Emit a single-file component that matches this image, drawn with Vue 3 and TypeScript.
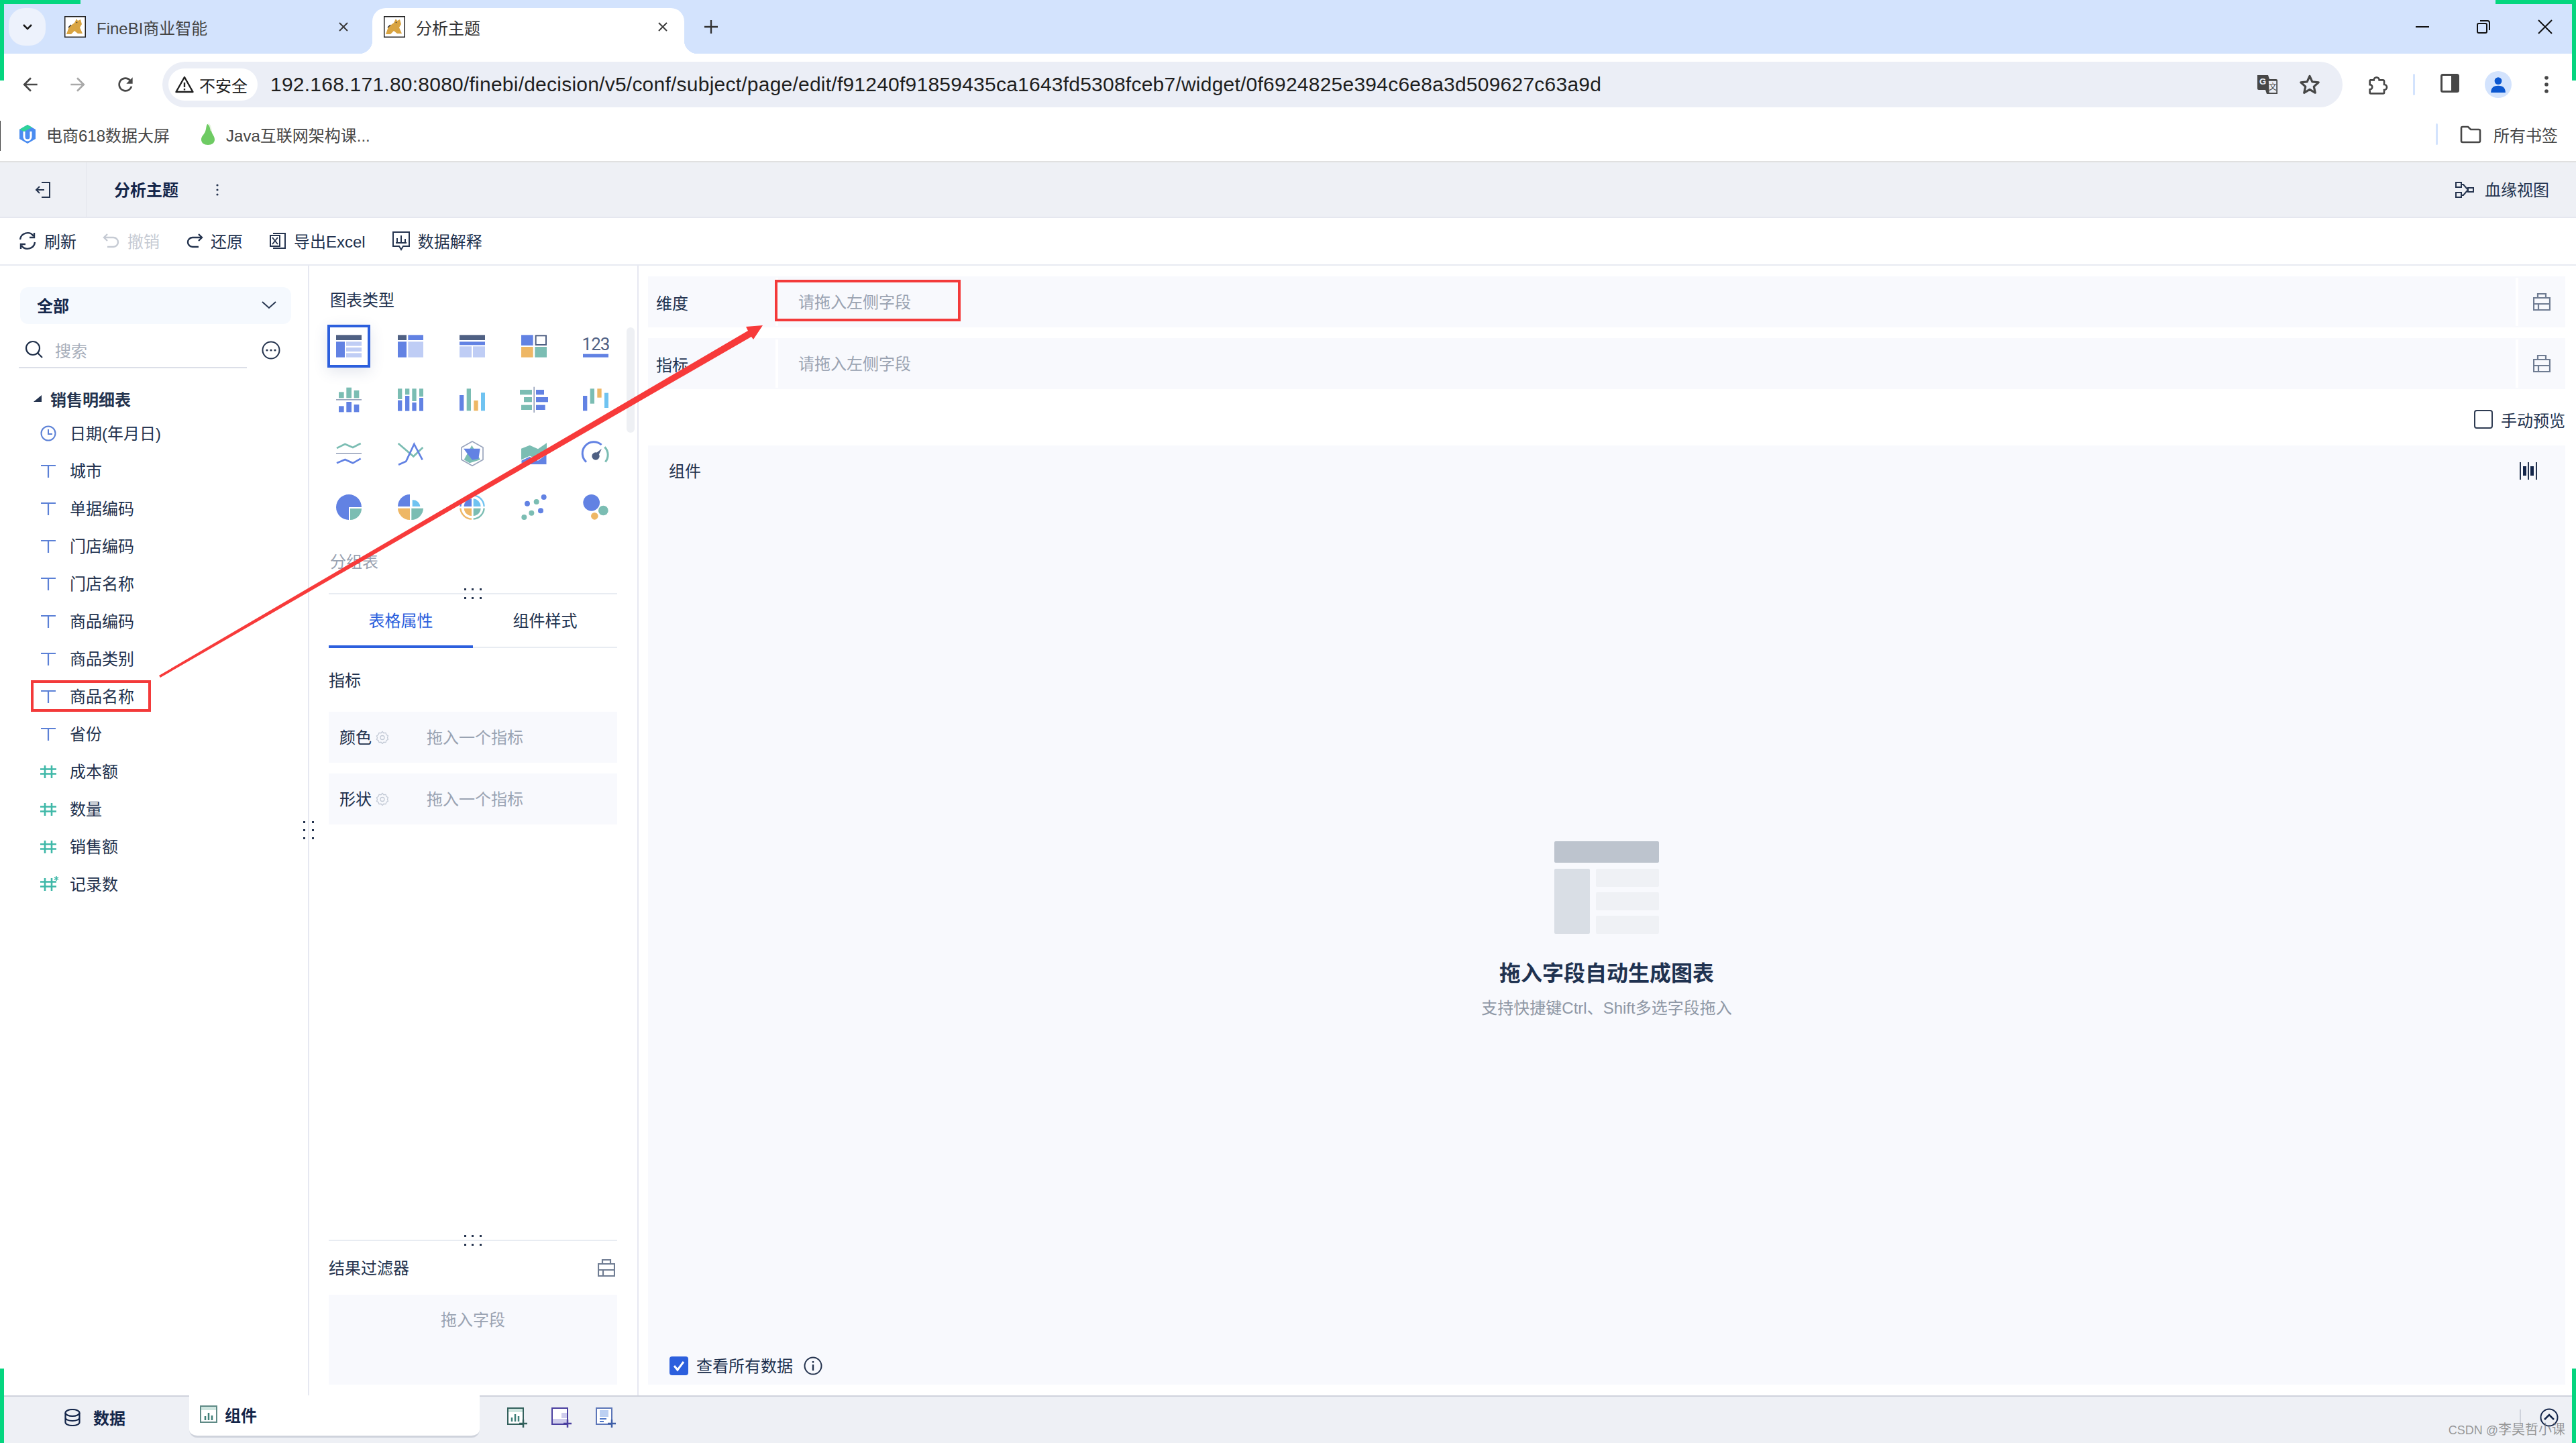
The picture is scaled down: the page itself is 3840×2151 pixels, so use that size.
<script setup lang="ts">
interface Field { name: string; kind: 'time' | 'text' | 'num' | 'rec' }
const fields: Field[] = [
  { name: '日期(年月日)', kind: 'time' },
  { name: '城市', kind: 'text' },
  { name: '单据编码', kind: 'text' },
  { name: '门店编码', kind: 'text' },
  { name: '门店名称', kind: 'text' },
  { name: '商品编码', kind: 'text' },
  { name: '商品类别', kind: 'text' },
  { name: '商品名称', kind: 'text' },
  { name: '省份', kind: 'text' },
  { name: '成本额', kind: 'num' },
  { name: '数量', kind: 'num' },
  { name: '销售额', kind: 'num' },
  { name: '记录数', kind: 'rec' },
]
const url = '192.168.171.80:8080/finebi/decision/v5/conf/subject/page/edit/f91240f91859435ca1643fd5308fceb7/widget/0f6924825e394c6e8a3d509627c63a9d'
const dropRows = [{ label: '维度' }, { label: '指标' }]
const measureRows = ['颜色', '形状']
</script>

<template>
  <div class="page">
    <!-- browser tab strip -->
    <div class="tabstrip">
      <div class="tab-search">
        <svg width="20" height="20" viewBox="0 0 20 20"><path d="M4 7l6 6 6-6" fill="none" stroke="#1f1f1f" stroke-width="2.6" /></svg>
      </div>
      <div class="tab">
        <svg class="favicon" viewBox="0 0 32 32"><rect x=".75" y=".75" width="30.5" height="30.5" fill="#fff" stroke="#222" stroke-width="1.5" /><path d="M3 27l4-11 8-6 3-6 2 3 4-2 2 7-3 5 4 9h-7l-5-4-5 5z" fill="#d9a441" /><path d="M6 17l4-4M18 9l1 1" stroke="#333" stroke-width="1.5" /></svg>
        <span class="tab-title">FineBI商业智能</span>
        <svg class="tab-close" viewBox="0 0 16 16"><path d="M2 2l12 12M14 2L2 14" stroke="#3c3c3c" stroke-width="2" /></svg>
      </div>
      <div class="tab tab-active">
        <svg class="favicon" viewBox="0 0 32 32"><rect x=".75" y=".75" width="30.5" height="30.5" fill="#fff" stroke="#222" stroke-width="1.5" /><path d="M3 27l4-11 8-6 3-6 2 3 4-2 2 7-3 5 4 9h-7l-5-4-5 5z" fill="#d9a441" /><path d="M6 17l4-4M18 9l1 1" stroke="#333" stroke-width="1.5" /></svg>
        <span class="tab-title">分析主题</span>
        <svg class="tab-close" viewBox="0 0 16 16"><path d="M2 2l12 12M14 2L2 14" stroke="#3c3c3c" stroke-width="2" /></svg>
      </div>
      <svg class="tab-plus" width="22" height="22" viewBox="0 0 22 22"><path d="M11 1v20M1 11h20" stroke="#333" stroke-width="2.4" /></svg>
      <div class="win-controls">
        <svg width="20" height="20" viewBox="0 0 20 20"><path d="M0 10h20" stroke="#111" stroke-width="2" /></svg>
        <svg width="20" height="20" viewBox="0 0 20 20"><rect x="1" y="5" width="14" height="14" rx="2" fill="none" stroke="#111" stroke-width="2" /><path d="M5 1h11a3 3 0 0 1 3 3v11" fill="none" stroke="#111" stroke-width="2" /></svg>
        <svg width="22" height="22" viewBox="0 0 22 22"><path d="M1 1l20 20M21 1L1 21" stroke="#111" stroke-width="2" /></svg>
      </div>
    </div>

    <!-- browser address bar -->
    <div class="navbar">
      <svg class="nav-btn" viewBox="0 0 24 24"><path d="M20 11H7.83l5.59-5.59L12 4l-8 8 8 8 1.41-1.41L7.83 13H20v-2z" fill="#474747" /></svg>
      <svg class="nav-btn" viewBox="0 0 24 24"><path d="M4 11h12.17l-5.59-5.59L12 4l8 8-8 8-1.41-1.41L16.17 13H4v-2z" fill="#a9a9a9" /></svg>
      <svg class="nav-btn" viewBox="0 0 24 24"><path d="M17.65 6.35A7.958 7.958 0 0 0 12 4c-4.42 0-7.99 3.58-7.99 8s3.57 8 7.99 8c3.73 0 6.84-2.55 7.73-6h-2.08A5.99 5.99 0 0 1 12 18c-3.31 0-6-2.69-6-6s2.69-6 6-6c1.66 0 3.14.69 4.22 1.78L13 11h7V4l-2.35 2.35z" fill="#474747" /></svg>
      <div class="omnibox">
        <div class="chip">
          <svg width="28" height="26" viewBox="0 0 28 26"><path d="M14 2l12.5 22h-25z" fill="none" stroke="#1f1f1f" stroke-width="2.4" stroke-linejoin="round" /><path d="M14 10v7M14 19v2.5" stroke="#1f1f1f" stroke-width="2.4" /></svg>
          <span>不安全</span>
        </div>
        <span class="url">{{ url }}</span>
        <svg class="omni-ico" width="34" height="34" viewBox="0 0 34 34"><path d="M2 3h16l2 6h10a2 2 0 0 1 2 2v20H16l-2-6H4a2 2 0 0 1-2-2z" fill="#474747" /><path d="M18 11h13v19H19z" fill="#ebeef6" stroke="#474747" stroke-width="1.5" /><text x="5" y="17" class="ico-text g">G</text><text x="19" y="25" class="ico-text w">文</text></svg>
        <svg class="omni-ico star" width="34" height="32" viewBox="0 0 24 24"><path d="M12 2.5l2.9 6.4 7 .7-5.2 4.7 1.5 6.9-6.2-3.6-6.2 3.6 1.5-6.9-5.2-4.7 7-.7z" fill="none" stroke="#474747" stroke-width="2.4" stroke-linejoin="round" /></svg>
      </div>
      <svg class="tb-ico ext" width="32" height="32" viewBox="0 0 24 24"><path d="M4 7h4a3 3 0 0 1 6 0h4a1.500 1.500 0 0 1 1.500 1.500v3.500a3 3 0 0 1 0 6v3a1 1 0 0 1-1 1H4.500a1 1 0 0 1-1-1v-3.500a2.700 2.700 0 0 0 0-5.400V8a1 1 0 0 1 .5-1z" fill="none" stroke="#474747" stroke-width="2" /></svg>
      <span class="tb-sep"></span>
      <svg class="tb-ico" width="28" height="28" viewBox="0 0 28 28"><rect x="1.500" y="1.500" width="25" height="25" rx="2" fill="none" stroke="#474747" stroke-width="3" /><rect x="16" y="2" width="10" height="24" fill="#474747" /></svg>
      <div class="avatar">
        <svg width="26" height="26" viewBox="0 0 24 24"><circle cx="12" cy="7" r="5" fill="#0b57d0" /><path d="M2 23c0-7 4-9.500 10-9.500S22 16 22 23z" fill="#0b57d0" /></svg>
      </div>
      <svg class="tb-ico dots" width="10" height="28" viewBox="0 0 10 28"><circle cx="5" cy="4" r="2.800" fill="#474747" /><circle cx="5" cy="14" r="2.800" fill="#474747" /><circle cx="5" cy="24" r="2.800" fill="#474747" /></svg>
    </div>

    <!-- bookmarks -->
    <div class="bookmarks">
      <svg class="bm-ico" width="30" height="32" viewBox="0 0 30 32"><path d="M3 9l12-7 12 7v14l-12 7-12-7z" fill="#4a8cf0" /><path d="M3 9l12-7 7 4-12 6z" fill="#2fd39a" /><path d="M10 12v8a5 5 0 0 0 10 0v-8" fill="none" stroke="#fff" stroke-width="3" /></svg>
      <span class="bm-text">电商618数据大屏</span>
      <svg class="bm-pear" width="28" height="34" viewBox="0 0 28 34"><path d="M14 2c3 0 4 5 5 10s5 8 5 13-4 8-10 8-10-3-10-8 4-7 6-12 1-11 4-11z" fill="#6ecb63" /><path d="M14 2c3 0 4 5 5 10" stroke="#e7f5e0" stroke-width="2" fill="none" /></svg>
      <span class="bm-text">Java互联网架构课...</span>
      <span class="bm-fill"></span>
      <span class="bm-sep"></span>
      <svg class="bm-folder" width="32" height="28" viewBox="0 0 32 28"><path d="M2 5a2 2 0 0 1 2-2h8l4 4h12a2 2 0 0 1 2 2v15a2 2 0 0 1-2 2H4a2 2 0 0 1-2-2z" fill="none" stroke="#474747" stroke-width="2.600" /></svg>
      <span class="bm-all">所有书签</span>
    </div>

    <!-- app header -->
    <div class="appbar">
      <div class="appbar-back">
        <svg width="26" height="26" viewBox="0 0 26 26"><path d="M10 2h12v22H10M2 13h12M7 8l-5 5 5 5" fill="none" stroke="#25344f" stroke-width="2" /></svg>
      </div>
      <span class="app-title">分析主题</span>
      <svg class="app-more" width="6" height="20" viewBox="0 0 6 20"><circle cx="3" cy="3" r="1.600" fill="#25344f" /><circle cx="3" cy="10" r="1.600" fill="#25344f" /><circle cx="3" cy="17" r="1.600" fill="#25344f" /></svg>
      <span class="bm-fill"></span>
      <svg width="28" height="26" viewBox="0 0 28 26"><path d="M1 2h8v7H1zM1 17h8v7H1zM19 10h8v6h-8z" fill="none" stroke="#25344f" stroke-width="2" /><path d="M9 5h3l7 8M9 21h3l7-8" fill="none" stroke="#25344f" stroke-width="2" /></svg>
      <span class="app-lineage">血缘视图</span>
    </div>

    <!-- action toolbar -->
    <div class="actions">
      <div class="act">
        <svg width="28" height="28" viewBox="0 0 28 28"><path d="M3 12A11 11 0 0 1 23 7M25 16A11 11 0 0 1 5 21" fill="none" stroke="#25344f" stroke-width="2.400" /><path d="M24 2v7h-7M4 26v-7h7" fill="none" stroke="#25344f" stroke-width="2.400" /></svg>
        <span>刷新</span>
      </div>
      <div class="act act-off">
        <svg width="26" height="26" viewBox="0 0 26 26"><path d="M7 3L2 8l5 5M2 8h14a7 7 0 0 1 0 14H7" fill="none" stroke="#c6cbd4" stroke-width="2.400" /></svg>
        <span>撤销</span>
      </div>
      <div class="act">
        <svg width="26" height="26" viewBox="0 0 26 26"><path d="M19 3l5 5-5 5M24 8H10a7 7 0 0 0 0 14h9" fill="none" stroke="#25344f" stroke-width="2.400" /></svg>
        <span>还原</span>
      </div>
      <div class="act">
        <svg width="26" height="26" viewBox="0 0 26 26"><path d="M6 2h18v22H6M2 5h14v16H2zM5 8l8 10M13 8l-8 10" fill="none" stroke="#25344f" stroke-width="2" /></svg>
        <span>导出Excel</span>
      </div>
      <div class="act">
        <svg width="28" height="30" viewBox="0 0 28 30"><path d="M2 2h24v21H17l-3 5-3-5H2z" fill="none" stroke="#25344f" stroke-width="2" /><path d="M8 11v7M14 7v11M20 12v6M6 18h16" fill="none" stroke="#25344f" stroke-width="2" /></svg>
        <span>数据解释</span>
      </div>
    </div>

    <!-- workspace -->
    <div class="main">
      <aside class="fields">
        <div class="scope">
          <span>全部</span>
          <svg width="22" height="12" viewBox="0 0 22 12"><path d="M1 1l10 9 10-9" fill="none" stroke="#25344f" stroke-width="2" /></svg>
        </div>
        <div class="search-row">
          <div class="search">
            <svg width="28" height="28" viewBox="0 0 28 28"><circle cx="12" cy="12" r="10" fill="none" stroke="#1f2f49" stroke-width="2.200" /><path d="M19 19l7 7" stroke="#1f2f49" stroke-width="2.200" /></svg>
            <span>搜索</span>
          </div>
          <svg class="more" width="28" height="28" viewBox="0 0 28 28"><circle cx="14" cy="14" r="12.500" fill="none" stroke="#25344f" stroke-width="2" /><circle cx="8" cy="14" r="1.600" fill="#25344f" /><circle cx="14" cy="14" r="1.600" fill="#25344f" /><circle cx="20" cy="14" r="1.600" fill="#25344f" /></svg>
        </div>
        <div class="tree-title">
          <svg width="12" height="10" viewBox="0 0 12 10"><path d="M0 10L12 0v10z" fill="#25344f" /></svg>
          <span>销售明细表</span>
        </div>
        <div v-for="f in fields" :key="f.name" class="field">
          <svg v-if="f.kind === 'time'" class="fico" viewBox="0 0 24 24"><circle cx="12" cy="12" r="10.500" fill="none" stroke="#5b80d6" stroke-width="2" /><path d="M12 6v7h6" fill="none" stroke="#5b80d6" stroke-width="2" /></svg>
          <svg v-else-if="f.kind === 'text'" class="fico" viewBox="0 0 24 24"><path d="M1 4h22M12 4v18" fill="none" stroke="#5b80d6" stroke-width="2.200" /></svg>
          <svg v-else class="fico" viewBox="0 0 24 24"><path d="M0 8.500h24M0 15.500h24M7 3v19M17 3v19" fill="none" stroke="#3fb8a8" stroke-width="2.600" /><path v-if="f.kind === 'rec'" d="M24 0v7M21 2l6 3M27 2l-6 3" stroke="#3fb8a8" stroke-width="1.500" /></svg>
          <span class="lift">{{ f.name }}</span>
        </div>
        <svg class="handle-v" width="16" height="28" viewBox="0 0 16 28"><g fill="#25344f"><rect y="0" width="3" height="3" /><rect y="12" width="3" height="3" /><rect y="24" width="3" height="3" /><rect x="13" y="0" width="3" height="3" /><rect x="13" y="12" width="3" height="3" /><rect x="13" y="24" width="3" height="3" /></g></svg>
      </aside>

      <section class="config">
        <div class="chart-types">
          <div class="sec-title">图表类型</div>
          <div class="chart-grid">
            <div class="cell selected">
              <svg viewBox="0 0 114 114"><rect y="7" width="114" height="23" fill="#4f6083" /><rect y="37" width="39" height="70" fill="#6282e3" /><rect x="45" y="37" width="69" height="19" fill="#bfcdf5" /><rect x="45" y="63" width="69" height="18" fill="#bfcdf5" /><rect x="45" y="88" width="69" height="19" fill="#bfcdf5" /></svg>
            </div>
            <div class="cell">
              <svg viewBox="0 0 114 114"><rect y="7" width="39" height="23" fill="#4f6083" /><rect x="46" y="7" width="68" height="23" fill="#6282e3" /><rect y="37" width="39" height="70" fill="#6282e3" /><rect x="46" y="37" width="68" height="70" fill="#bfcdf5" /></svg>
            </div>
            <div class="cell">
              <svg viewBox="0 0 114 114"><rect y="7" width="114" height="23" fill="#4f6083" /><rect y="37" width="114" height="15" fill="#6282e3" /><rect y="58" width="54" height="49" fill="#bfcdf5" /><rect x="60" y="58" width="54" height="49" fill="#bfcdf5" /></svg>
            </div>
            <div class="cell">
              <svg viewBox="0 0 114 114"><rect y="7" width="53" height="47" fill="#6282e3" /><rect x="65" y="10" width="46" height="41" fill="#fff" stroke="#4f6083" stroke-width="6" /><rect y="60" width="53" height="47" fill="#eeb765" /><rect x="61" y="60" width="53" height="47" fill="#7bbdb3" /></svg>
            </div>
            <div class="cell">
              <svg viewBox="0 0 114 114"><text x="57" y="74" text-anchor="middle" class="num-glyph">123</text><rect y="92" width="114" height="15" fill="#6282e3" /></svg>
            </div>

            <div class="cell">
              <svg viewBox="0 0 114 114"><rect x="12" y="22" width="23" height="27" fill="#7bbdb3" /><rect x="46" y="2" width="23" height="47" fill="#7bbdb3" /><rect x="80" y="15" width="23" height="34" fill="#7bbdb3" /><rect y="54" width="114" height="5" fill="#9aa5bd" /><rect x="12" y="85" width="23" height="27" fill="#6282e3" /><rect x="46" y="66" width="23" height="46" fill="#6282e3" /><rect x="80" y="78" width="23" height="34" fill="#6282e3" /></svg>
            </div>
            <div class="cell">
              <svg viewBox="0 0 114 114"><rect y="7" width="19" height="47" fill="#7bbdb3" /><rect y="59" width="19" height="48" fill="#6282e3" /><rect x="33" y="7" width="19" height="27" fill="#7bbdb3" /><rect x="33" y="39" width="19" height="68" fill="#6282e3" /><rect x="64" y="7" width="19" height="56" fill="#7bbdb3" /><rect x="64" y="69" width="19" height="38" fill="#6282e3" /><rect x="96" y="7" width="18" height="36" fill="#7bbdb3" /><rect x="96" y="48" width="18" height="59" fill="#6282e3" /></svg>
            </div>
            <div class="cell">
              <svg viewBox="0 0 114 114"><rect y="36" width="19" height="70" fill="#6282e3" /><rect x="32" y="7" width="19" height="99" fill="#7bbdb3" /><rect x="64" y="60" width="19" height="46" fill="#eeb765" /><rect x="96" y="25" width="18" height="81" fill="#6fc3f1" /></svg>
            </div>
            <div class="cell">
              <svg viewBox="0 0 114 114" class="over"><rect x="55" y="-1" width="5" height="115" fill="#9aa5bd" /><rect x="-6" y="12" width="54" height="22" fill="#7bbdb3" /><rect x="12" y="45" width="36" height="22" fill="#7bbdb3" /><rect y="80" width="48" height="22" fill="#7bbdb3" /><rect x="66" y="12" width="36" height="22" fill="#6282e3" /><rect x="66" y="45" width="54" height="22" fill="#6282e3" /><rect x="66" y="80" width="41" height="22" fill="#6282e3" /></svg>
            </div>
            <div class="cell">
              <svg viewBox="0 0 114 114"><rect y="39" width="19" height="67" fill="#6282e3" /><rect x="32" y="7" width="19" height="67" fill="#7bbdb3" /><rect x="64" y="7" width="19" height="40" fill="#eeb765" /><rect x="96" y="26" width="18" height="67" fill="#6fc3f1" /></svg>
            </div>

            <div class="cell">
              <svg viewBox="0 0 114 114"><path d="M3 33l37-18 35 15 35-18" fill="none" stroke="#7bbdb3" stroke-width="8" /><rect y="54" width="114" height="5" fill="#9aa5bd" /><path d="M3 100l37-16 35 16 35-20" fill="none" stroke="#6282e3" stroke-width="8" /></svg>
            </div>
            <div class="cell">
              <svg viewBox="0 0 114 114"><path d="M2 12l68 58 42-40" fill="none" stroke="#7bbdb3" stroke-width="8" /><path d="M3 107l34-15L73 15l37 70" fill="none" stroke="#6282e3" stroke-width="8" /></svg>
            </div>
            <div class="cell">
              <svg viewBox="0 0 114 114"><path d="M57 3l48 27v55l-48 27-48-27V30z" fill="none" stroke="#9aa5bd" stroke-width="5" /><path d="M55 20l38 65-48 15-25-15z" fill="#7bbdb3" /><path d="M18 35h74l-7 45-28 6z" fill="#6282e3" /></svg>
            </div>
            <div class="cell">
              <svg viewBox="0 0 114 114"><path d="M0 35l38-15 37 17 39-27v72L75 85 38 68 0 85z" fill="#7bbdb3" /><path d="M0 88l38-18 37 18 25-18 14-10v47H0z" fill="#6282e3" stroke="#fff" stroke-width="3" /></svg>
            </div>
            <div class="cell">
              <svg viewBox="0 0 114 114"><path d="M15 95A50 50 0 0 1 83 18" fill="none" stroke="#6282e3" stroke-width="9" /><path d="M97 28A50 50 0 0 1 100 95" fill="none" stroke="#7bbdb3" stroke-width="9" /><circle cx="57" cy="69" r="17" fill="#4f6083" /><path d="M50 62l34-27-20 42z" fill="#4f6083" /></svg>
            </div>

            <div class="cell">
              <svg viewBox="0 0 114 114"><path d="M57 114A57 57 0 1 1 114 57H57z" fill="#6282e3" /><path d="M63 63h51A51 51 0 0 1 63 114z" fill="#7bbdb3" /></svg>
            </div>
            <div class="cell">
              <svg viewBox="0 0 114 114"><path d="M54 54H0A54 54 0 0 1 54 0z" fill="#6282e3" /><path d="M65 54V25a32 32 0 0 1 35 29z" fill="#6fc3f1" /><path d="M54 62H0a54 54 0 0 0 54 52z" fill="#eeb765" /><path d="M61 62h53a53 53 0 0 1-53 52z" fill="#7bbdb3" /></svg>
            </div>
            <div class="cell">
              <svg viewBox="0 0 114 114"><path d="M54 4A53 53 0 0 0 4 54" fill="none" stroke="#6282e3" stroke-width="7" /><path d="M62 4a52 52 0 0 1 48 50" fill="none" stroke="#6fc3f1" stroke-width="7" /><path d="M4 62a52 52 0 0 0 50 48" fill="none" stroke="#eeb765" stroke-width="7" /><path d="M110 62a52 52 0 0 1-48 48" fill="none" stroke="#7bbdb3" stroke-width="7" /><path d="M54 54H20a35 35 0 0 1 34-35z" fill="#6282e3" /><path d="M62 54V19a36 36 0 0 1 33 35z" fill="#6fc3f1" /><path d="M54 62H20a35 35 0 0 0 34 34z" fill="#eeb765" /><path d="M62 62h33a34 34 0 0 1-33 34z" fill="#7bbdb3" /></svg>
            </div>
            <div class="cell">
              <svg viewBox="0 0 114 114"><circle cx="13" cy="102" r="12" fill="#7bbdb3" /><circle cx="46" cy="83" r="12" fill="#7bbdb3" /><circle cx="87" cy="73" r="12" fill="#6282e3" /><circle cx="27" cy="41" r="12" fill="#6282e3" /><circle cx="68" cy="33" r="12" fill="#7bbdb3" /><circle cx="101" cy="12" r="12" fill="#6282e3" /></svg>
            </div>
            <div class="cell">
              <svg viewBox="0 0 114 114"><circle cx="38" cy="37" r="37" fill="#6282e3" /><circle cx="91" cy="72" r="22" fill="#7bbdb3" /><circle cx="52" cy="97" r="16" fill="#eeb765" /></svg>
            </div>
          </div>
          <div class="chart-name">分组表</div>
          <div class="scrollbar"></div>
        </div>

        <div class="rule">
          <svg class="handle-h" width="26" height="16" viewBox="0 0 26 16"><g fill="#25344f"><rect width="3" height="3" /><rect x="11" width="3" height="3" /><rect x="23" width="3" height="3" /><rect y="13" width="3" height="3" /><rect x="11" y="13" width="3" height="3" /><rect x="23" y="13" width="3" height="3" /></g></svg>
        </div>
        <div class="prop-tabs">
          <div class="prop-tab active">表格属性</div>
          <div class="prop-tab">组件样式</div>
        </div>
        <div class="prop-head">指标</div>
        <div class="measures">
          <div v-for="m in measureRows" :key="m" class="measure">
            <span class="m-label lift">{{ m }}</span>
            <svg class="gear" width="20" height="20" viewBox="0 0 20 20"><path d="M10 1.500l2 2.200 3-.3 1 2.800 2.500 1.600-1 2.700 1 2.700-2.500 1.600-1 2.800-3-.3-2 2.200-2-2.200-3 .3-1-2.800L1.500 13.500l1-2.700-1-2.700L4 6.200l1-2.800 3 .3z" fill="none" stroke="#c3cad6" stroke-width="1.300" /><circle cx="10" cy="10.500" r="3" fill="none" stroke="#c3cad6" stroke-width="1.300" /></svg>
            <span class="m-hint lift">拖入一个指标</span>
          </div>
        </div>
        <div class="config-fill"></div>
        <div class="rule">
          <svg class="handle-h" width="26" height="16" viewBox="0 0 26 16"><g fill="#25344f"><rect width="3" height="3" /><rect x="11" width="3" height="3" /><rect x="23" width="3" height="3" /><rect y="13" width="3" height="3" /><rect x="11" y="13" width="3" height="3" /><rect x="23" y="13" width="3" height="3" /></g></svg>
        </div>
        <div class="filter-head">
          <span class="lift">结果过滤器</span>
          <svg width="26" height="26" viewBox="0 0 26 26"><path d="M7 7V1h12v6M1 7h24v18H1zM1 16h24M8 16v9" fill="none" stroke="#6f7c92" stroke-width="2.200" /></svg>
        </div>
        <div class="filter-drop">拖入字段</div>
      </section>

      <section class="stage">
        <div v-for="r in dropRows" :key="r.label" class="drop">
          <div class="drop-label">{{ r.label }}</div>
          <div class="drop-sep"></div>
          <div class="drop-hint lift">请拖入左侧字段</div>
          <div class="drop-sep"></div>
          <div class="drop-end">
            <svg width="26" height="26" viewBox="0 0 26 26"><path d="M7 7V1h12v6M1 7h24v18H1zM1 16h24M8 16v9" fill="none" stroke="#6f7c92" stroke-width="2.200" /></svg>
          </div>
        </div>
        <div class="manual">
          <span class="check"></span>
          <span>手动预览</span>
        </div>
        <div class="canvas">
          <div class="canvas-head">
            <span class="lift">组件</span>
            <svg width="26" height="26" viewBox="0 0 26 26"><path d="M1 0v26M25 0v26M13 0v26" stroke="#25344f" stroke-width="2" /><rect x="5" y="6" width="5" height="14" fill="#14264a" /><rect x="16" y="6" width="5" height="14" fill="#14264a" /></svg>
          </div>
          <div class="empty">
            <svg width="156" height="138" viewBox="0 0 156 138"><rect width="156" height="32" rx="2" fill="#bdc4ce" /><rect y="41" width="53" height="97" rx="2" fill="#d9dee5" /><rect x="62" y="41" width="94" height="27" rx="2" fill="#eff1f5" /><rect x="62" y="76" width="94" height="27" rx="2" fill="#eff1f5" /><rect x="62" y="111" width="94" height="27" rx="2" fill="#eff1f5" /></svg>
            <div class="empty-title">拖入字段自动生成图表</div>
            <div class="empty-sub">支持快捷键Ctrl、Shift多选字段拖入</div>
          </div>
          <div class="canvas-foot">
            <span class="check on">
              <svg width="20" height="18" viewBox="0 0 20 18"><path d="M3 9l5 6L17 3" fill="none" stroke="#fff" stroke-width="3" /></svg>
            </span>
            <span class="lift">查看所有数据</span>
            <svg class="info" width="28" height="28" viewBox="0 0 28 28"><circle cx="14" cy="14" r="12.500" fill="none" stroke="#25344f" stroke-width="2" /><path d="M14 12v9M14 7v2.500" stroke="#25344f" stroke-width="2.400" /></svg>
          </div>
        </div>
      </section>
    </div>

    <!-- bottom tabs -->
    <div class="bottom">
      <div class="b-data">
        <svg width="24" height="26" viewBox="0 0 24 26"><ellipse cx="12" cy="6" rx="10.500" ry="5" fill="none" stroke="#14264a" stroke-width="2.200" /><path d="M1.500 6v14c0 3 4.500 5 10.500 5s10.500-2 10.500-5V6M1.500 13c0 3 4.500 5 10.500 5s10.500-2 10.500-5" fill="none" stroke="#14264a" stroke-width="2.200" /></svg>
        <span>数据</span>
      </div>
      <div class="b-active">
        <svg width="26" height="26" viewBox="0 0 26 26"><rect x="1" y="1" width="24" height="24" fill="#fff" stroke="#5f8a86" stroke-width="2" /><rect x="2" y="2" width="22" height="5" fill="#cfe6e0" /><path d="M8 22v-6M13 22V11M18 22v-7" stroke="#3f7f78" stroke-width="2.500" /></svg>
        <span>组件</span>
      </div>
      <div class="b-tools">
        <svg width="30" height="30" viewBox="0 0 30 30"><rect x="1" y="1" width="23" height="24" fill="#fff" stroke="#33605c" stroke-width="2" /><rect x="2" y="2" width="21" height="5" fill="#cfe6e0" /><path d="M7 21v-6M12 21V10M17 21v-8" stroke="#3f7f78" stroke-width="2.500" /><path d="M24 18v12M18 24h12" stroke="#33605c" stroke-width="2.500" /></svg>
        <svg width="30" height="30" viewBox="0 0 30 30"><rect x="1" y="1" width="23" height="24" fill="#fff" stroke="#4a3f9f" stroke-width="2" /><rect x="15" y="8" width="8" height="8" fill="#cfcdec" /><rect x="2" y="17" width="21" height="7" fill="#cfcdec" /><path d="M24 18v12M18 24h12" stroke="#4a3f9f" stroke-width="2.500" /></svg>
        <svg width="30" height="30" viewBox="0 0 30 30"><rect x="1" y="1" width="23" height="24" fill="#fff" stroke="#5c76b8" stroke-width="2" /><rect x="6" y="4" width="13" height="10" fill="#bcd0f2" /><rect x="6" y="16" width="10" height="2" fill="#4f78c8" /><rect x="6" y="20" width="6" height="2" fill="#4f78c8" /><path d="M24 18v12M18 24h12" stroke="#3f5fa8" stroke-width="2.500" /></svg>
      </div>
      <span class="bm-fill"></span>
      <span class="b-sep"></span>
      <svg class="b-up" width="28" height="28" viewBox="0 0 28 28"><circle cx="14" cy="14" r="12.500" fill="none" stroke="#14264a" stroke-width="2" /><path d="M7 17l7-7 7 7" fill="none" stroke="#14264a" stroke-width="2.600" /></svg>
    </div>

    <div class="watermark"><span class="wm-latin">CSDN @</span>李昊哲小课</div>

    <!-- annotations drawn over the UI -->
    <div class="mark mark-field"></div>
    <div class="mark mark-drop"></div>
    <svg class="arrow" width="3840" height="2151" viewBox="0 0 3840 2151"><path d="M237 1007L1115 493 1112 487 1137 485 1123 506 1120 502 239 1010z" fill="#f73a3a" /></svg>

    <!-- green window-capture corners -->
    <i class="gc gc-tl"></i><i class="gc gc-lt"></i><i class="gc gc-tr"></i><i class="gc gc-rt"></i><i class="gc gc-lb"></i><i class="gc gc-rb"></i>
  </div>
</template>

<style scoped>
.page {
  position: relative;
  width: 3840px;
  height: 2151px;
  display: flex;
  flex-direction: column;
  overflow: hidden;
  background: #fff;
  color: #21314d;
  font-family: "Liberation Sans", "Noto Sans CJK SC", sans-serif;
  font-size: 24px;
}
.bm-fill { flex: 1; }
.lift { padding-bottom: 3px; }

/* browser chrome */
.tabstrip {
  height: 80px;
  flex: none;
  display: flex;
  align-items: flex-end;
  background: #d3e3fd;
  color: #444;
  padding-left: 13px;
}
.tab-search {
  width: 55px;
  height: 56px;
  margin-bottom: 12px;
  border-radius: 24px;
  background: #edf2fc;
  display: flex;
  align-items: center;
  justify-content: center;
}
.tab {
  width: 487px;
  height: 68px;
  flex: none;
  display: flex;
  align-items: center;
  padding: 0 35px 12px 28px;
  box-sizing: border-box;
}
.tab-active {
  position: relative;
  width: 465px;
  margin-left: 0;
  padding: 0 24px 12px 17px;
  background: #fff;
  color: #333;
  border-radius: 20px 20px 0 0;
}
.tab-active::before, .tab-active::after {
  content: "";
  position: absolute;
  bottom: 0;
  width: 20px;
  height: 20px;
}
.tab-active::before { left: -20px; background: radial-gradient(circle at 0 0, #d3e3fd 20px, #fff 20.500px); }
.tab-active::after { right: -20px; background: radial-gradient(circle at 100% 0, #d3e3fd 20px, #fff 20.500px); }
.favicon { width: 32px; height: 32px; flex: none; }
.tab-title { margin-left: 16px; flex: 1; white-space: nowrap; }
.tab-close { width: 16px; height: 16px; }
.tab-plus { margin: 0 0 29px 29px; }
.win-controls {
  margin-left: auto;
  display: flex;
  align-items: center;
  gap: 71px;
  height: 80px;
  padding-right: 35px;
}

.navbar {
  height: 92px;
  flex: none;
  display: flex;
  align-items: flex-start;
  box-sizing: border-box;
  padding: 12px 0 0 29px;
}
.nav-btn { width: 32px; height: 32px; margin: 18px 39px 0 0; flex: none; }
.omnibox {
  width: 3250px;
  height: 68px;
  flex: none;
  border-radius: 34px;
  background: #ebeef6;
  display: flex;
  align-items: center;
  padding-left: 9px;
  box-sizing: border-box;
}
.chip {
  width: 133px;
  height: 48px;
  border-radius: 24px;
  background: #fff;
  display: flex;
  align-items: center;
  padding-left: 10px;
  gap: 8px;
  box-sizing: border-box;
  color: #1f1f1f;
  white-space: nowrap;
  flex: none;
}
.url {
  margin-left: 19px;
  font-size: 30px;
  letter-spacing: .23px;
  color: #1f1f1f;
  white-space: nowrap;
  flex: 1;
}
.ico-text { font-family: "Liberation Sans", "Noto Sans CJK SC", sans-serif; font-size: 13px; font-weight: 700; }
.ico-text.g { fill: #ebeef6; }
.ico-text.w { fill: #474747; font-weight: 400; font-size: 12px; }
.omni-ico { flex: none; margin-right: 29px; }
.omni-ico.star { margin-right: 32px; }
.tb-ico { flex: none; margin-top: 18px; }
.tb-ico.ext { margin-left: 36px; }
.tb-sep { width: 3px; height: 32px; margin: 18px 0 0 37px; background: #d3e3fd; border-radius: 2px; flex: none; }
.navbar .tb-sep + .tb-ico { margin-left: 38px; }
.avatar {
  width: 40px;
  height: 40px;
  margin: 14px 0 0 38px;
  border-radius: 50%;
  background: #d3e3fd;
  display: flex;
  align-items: center;
  justify-content: center;
  flex: none;
}
.tb-ico.dots { margin-left: 47px; margin-top: 20px; }

.bookmarks {
  position: relative;
  height: 70px;
  flex: none;
  box-sizing: border-box;
  border-bottom: 2px solid #e0e0e0;
  display: flex;
  align-items: center;
  padding: 0 27px 12px 26px;
  color: #474747;
}
.bookmarks::before {
  content: "";
  position: absolute;
  left: 0;
  top: 8px;
  width: 1px;
  height: 45px;
  background: #444;
}
.bm-text { margin-left: 13px; white-space: nowrap; }
.bm-pear { margin-left: 43px; }
.bm-sep { width: 3px; height: 32px; background: #d3e3fd; border-radius: 2px; }
.bm-folder { margin-left: 33px; }
.bm-all { margin-left: 18px; white-space: nowrap; }

/* app */
.appbar {
  height: 83px;
  flex: none;
  box-sizing: border-box;
  background: #eef0f5;
  border-bottom: 2px solid #e5e7ef;
  display: flex;
  align-items: center;
  padding-right: 40px;
  color: #25344f;
}
.appbar-back {
  width: 130px;
  height: 100%;
  border-right: 2px solid #e8eaf0;
  box-sizing: border-box;
  display: flex;
  align-items: center;
  padding-left: 52px;
  flex: none;
}
.app-title { margin: 0 0 2px 40px; font-weight: 700; color: #14264a; }
.app-more { margin-left: 55px; }
.app-lineage { margin: 0 0 2px 16px; }

.actions {
  height: 71px;
  flex: none;
  box-sizing: border-box;
  border-bottom: 2px solid #e8eaf2;
  display: flex;
  align-items: center;
  padding: 0 0 2px 27px;
}
.act { display: flex; align-items: center; gap: 11px; margin-right: 39px; white-space: nowrap; }
.act-off { color: #c6cbd4; }

.main { flex: 1; min-height: 0; display: flex; }

/* fields */
.fields {
  position: relative;
  width: 461px;
  flex: none;
  box-sizing: border-box;
  border-right: 2px solid #e6e8f1;
  padding-top: 32px;
}
.scope {
  width: 404px;
  height: 55px;
  margin-left: 30px;
  padding: 0 22px 2px 25px;
  box-sizing: border-box;
  border-radius: 12px;
  background: #f5f9fe;
  display: flex;
  align-items: center;
  justify-content: space-between;
  font-weight: 700;
  color: #14264a;
}
.search-row { display: flex; align-items: center; margin: 12px 0 0 28px; }
.search {
  width: 340px;
  height: 54px;
  box-sizing: border-box;
  border-bottom: 2px solid #dcdfe8;
  display: flex;
  align-items: center;
  padding-left: 9px;
  gap: 17px;
  color: #a7aeba;
}
.more { margin-left: 22px; }
.tree-title {
  height: 44px;
  margin: 23px 0 2px;
  padding-left: 50px;
  display: flex;
  align-items: center;
  gap: 13px;
  font-weight: 700;
  color: #25344f;
}
.field {
  height: 56px;
  padding-left: 60px;
  display: flex;
  align-items: center;
  gap: 20px;
  white-space: nowrap;
}
.fico { width: 24px; height: 24px; overflow: visible; flex: none; }
.handle-v { position: absolute; right: -9px; top: 828px; }

/* config column */
.config {
  width: 491px;
  flex: none;
  box-sizing: border-box;
  border-right: 2px solid #e6e8f1;
  display: flex;
  flex-direction: column;
}
.chart-types { position: relative; height: 488px; flex: none; padding-top: 36px; box-sizing: border-box; }
.sec-title { margin-left: 31px; line-height: 32px; }
.chart-grid {
  margin: 12px 0 0 13px;
  display: grid;
  grid-template-columns: repeat(5, 92px);
  grid-auto-rows: 80px;
}
.cell { display: flex; align-items: center; justify-content: center; }
.cell svg { width: 38px; height: 38px; overflow: visible; }
.cell.selected svg { position: relative; }
.cell.selected::before {
  content: "";
  position: absolute;
  width: 64px;
  height: 64px;
  box-sizing: border-box;
  border: 4px solid #2c5fdd;
  background: #fff;
  box-shadow: 0 6px 20px rgba(60, 80, 130, 0.14);
}
.num-glyph { font-family: Roboto, "Liberation Sans", sans-serif; font-size: 78px; fill: #4f6083; letter-spacing: -3px; }
.chart-name { margin: 26px 0 0 31px; line-height: 32px; color: #9aa3b2; }
.scrollbar {
  position: absolute;
  left: 473px;
  top: 92px;
  width: 12px;
  height: 157px;
  border-radius: 6px;
  background: #eef0f4;
}
.rule { position: relative; height: 2px; margin: 0 30px 0 29px; background: #e8ecf2; flex: none; }
.handle-h { position: absolute; left: 202px; top: -7px; }
.prop-tabs { display: flex; margin: 0 30px 0 29px; flex: none; }
.prop-tab { flex: 1; height: 80px; line-height: 80px; text-align: center; box-shadow: inset 0 -2px #e8ecf2; }
.prop-tab.active { color: #2c5fdd; box-shadow: inset 0 -4px #2c5fdd; }
.prop-head { margin: 33px 0 0 29px; line-height: 32px; flex: none; }
.measures { margin: 30px 30px 0 29px; display: flex; flex-direction: column; gap: 16px; flex: none; }
.measure {
  height: 76px;
  padding-left: 16px;
  background: #f8f9fd;
  display: flex;
  align-items: center;
}
.gear { margin-left: 6px; }
.m-hint { margin-left: 56px; color: #9aa3b2; }
.config-fill { flex: 1; }
.filter-head {
  margin: 20px 33px 0 29px;
  height: 40px;
  display: flex;
  align-items: center;
  justify-content: space-between;
  flex: none;
}
.filter-drop {
  margin: 20px 30px 16px 29px;
  height: 134px;
  padding-top: 22px;
  box-sizing: border-box;
  background: #f8f9fd;
  text-align: center;
  line-height: 32px;
  color: #9aa3b2;
  flex: none;
}

/* stage */
.stage {
  flex: 1;
  min-width: 0;
  padding: 16px 16px 16px 14px;
  display: flex;
  flex-direction: column;
  gap: 16px;
}
.drop { height: 76px; flex: none; display: flex; align-items: center; background: #f8f9fd; }
.drop-label { width: 178px; padding-left: 12px; flex: none; }
.drop-sep { width: 4px; height: 72px; background: #fff; flex: none; }
.drop-hint { flex: 1; padding-left: 30px; color: #9aa3b2; }
.drop-end { width: 70px; flex: none; display: flex; justify-content: center; }
.manual {
  height: 68px;
  margin-top: -16px;
  padding-top: 22px;
  box-sizing: border-box;
  flex: none;
  display: flex;
  align-items: center;
  justify-content: flex-end;
  gap: 12px;
  white-space: nowrap;
}
.check {
  width: 28px;
  height: 28px;
  box-sizing: border-box;
  border: 2px solid #2e3b52;
  border-radius: 4px;
  flex: none;
  display: flex;
  align-items: center;
  justify-content: center;
}
.check.on { border: none; background: #2c5fdd; }
.canvas { flex: 1; min-height: 0; background: #f8f9fd; display: flex; flex-direction: column; }
.canvas-head {
  height: 76px;
  flex: none;
  padding: 0 42px 0 31px;
  display: flex;
  align-items: center;
  justify-content: space-between;
}
.empty { flex: 1; padding-top: 514px; box-sizing: border-box; display: flex; flex-direction: column; align-items: center; }
.empty-title { margin-top: 37px; font-size: 32px; line-height: 44px; font-weight: 700; color: #1f3250; }
.empty-sub { margin-top: 14px; line-height: 32px; color: #8f98a6; }
.canvas-foot {
  height: 28px;
  flex: none;
  margin: 0 0 14px 32px;
  display: flex;
  align-items: center;
  gap: 12px;
  white-space: nowrap;
}
.info { margin-left: 4px; }

/* bottom bar */
.bottom {
  height: 71px;
  flex: none;
  box-sizing: border-box;
  background: #eef0f5;
  border-top: 2px solid #cfd3dc;
  display: flex;
  padding: 0 26px 8px 0;
  align-items: center;
  font-weight: 700;
  color: #14264a;
}
.b-data { width: 282px; flex: none; display: flex; align-items: center; padding-left: 96px; gap: 19px; box-sizing: border-box; }
.b-active {
  width: 433px;
  height: 63px;
  flex: none;
  align-self: flex-start;
  margin-top: -2px;
  box-sizing: border-box;
  background: #fff;
  border-bottom: 3px solid #cfd3dc;
  border-radius: 0 0 12px 12px;
  display: flex;
  align-items: center;
  padding: 0 0 4px 16px;
  gap: 11px;
}
.b-tools { display: flex; align-items: center; gap: 36px; margin-left: 41px; }
.b-sep { width: 2px; height: 24px; background: #cfd3dc; margin-right: 28px; }
.watermark {
  position: absolute;
  right: 16px;
  top: 2117px;
  font-size: 20px;
  line-height: 28px;
  color: rgba(120, 120, 120, 0.75);
  white-space: nowrap;
}
.wm-latin { font-size: 18px; }

/* annotations */
.mark { position: absolute; box-sizing: border-box; border: 4px solid #f33a3a; }
.mark-field { left: 46px; top: 1014px; width: 179px; height: 47px; }
.mark-drop { left: 1155px; top: 417px; width: 277px; height: 62px; }
.arrow { position: absolute; left: 0; top: 0; pointer-events: none; }

.gc { position: absolute; background: #04d67f; }
.gc-tl { left: 0; top: 0; width: 120px; height: 6px; }
.gc-lt { left: 0; top: 0; width: 6px; height: 120px; }
.gc-tr { right: 0; top: 0; width: 120px; height: 6px; }
.gc-rt { right: 0; top: 0; width: 6px; height: 120px; }
.gc-lb { left: 0; bottom: 0; width: 6px; height: 111px; }
.gc-rb { right: 0; bottom: 0; width: 6px; height: 111px; }
</style>
